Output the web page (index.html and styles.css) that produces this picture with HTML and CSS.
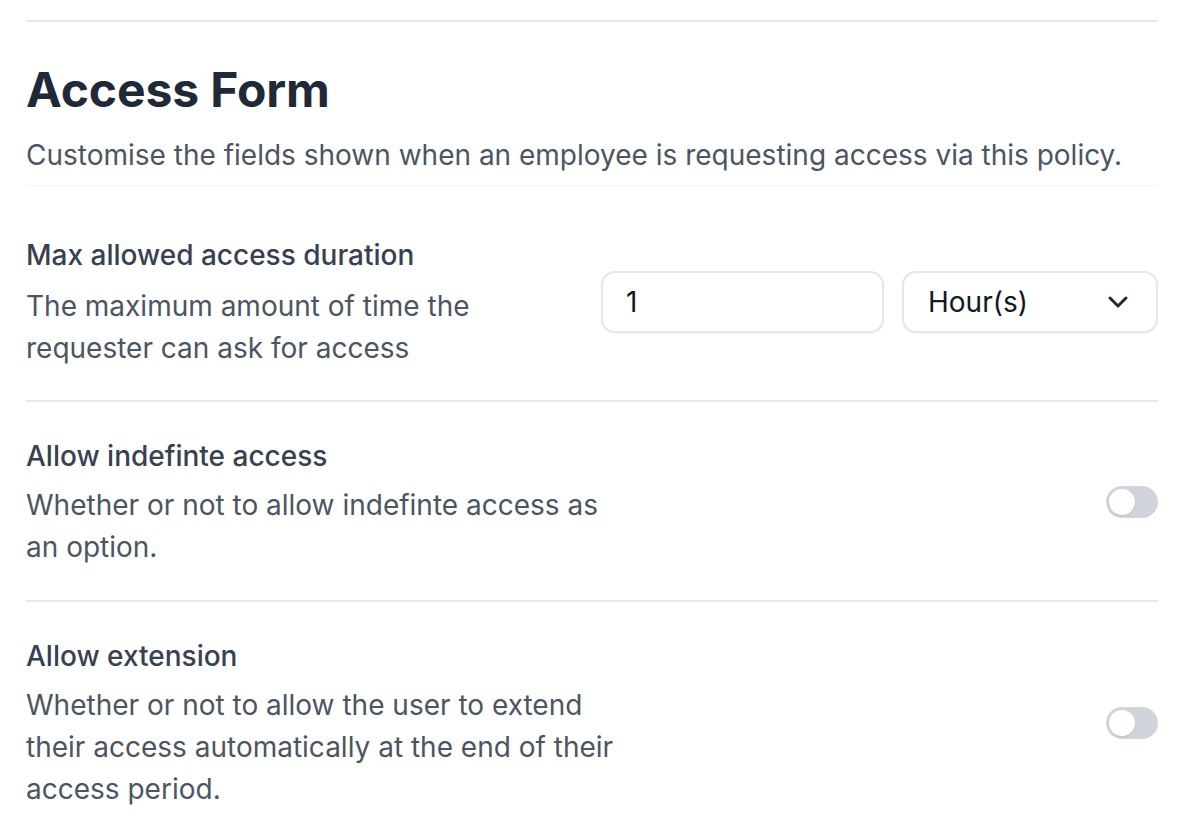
FILE: index.html
```html
<!DOCTYPE html>
<html lang="en">
<head>
<meta charset="utf-8">
<title>Access Form</title>
<link rel="stylesheet" href="styles.css">
</head>
<body>
<section class="section">
  <header class="header">
    <h2 class="title">Access Form</h2>
    <p class="subtitle">Customise the fields shown when an employee is requesting access via this policy.</p>
  </header>
  <div class="rows">
    <div class="row row-first">
      <div class="text text-narrow">
        <div class="label">Max allowed access duration</div>
        <div class="desc">The maximum amount of time the requester can ask for access</div>
      </div>
      <div class="controls">
        <div class="input">1</div>
        <div class="select">
          <span>Hour(s)</span>
          <svg class="chev" width="20" height="12" viewBox="0 0 20 12"><path d="M2 2 L10 10 L18 2" fill="none" stroke="#1f2937" stroke-width="3" stroke-linecap="round" stroke-linejoin="round"/></svg>
        </div>
      </div>
    </div>
    <div class="row">
      <div class="text">
        <div class="label">Allow indefinte access</div>
        <div class="desc">Whether or not to allow indefinte access as an option.</div>
      </div>
      <div class="toggle"><span class="knob"></span></div>
    </div>
    <div class="row">
      <div class="text">
        <div class="label">Allow extension</div>
        <div class="desc">Whether or not to allow the user to extend their access automatically at the end of their access period.</div>
      </div>
      <div class="toggle"><span class="knob"></span></div>
    </div>
  </div>
</section>
</body>
</html>
```

FILE: styles.css
```css
* { box-sizing: border-box; }
html, body { margin: 0; padding: 0; background: #ffffff; }
body {
  font-family: "Inter", "Noto Sans", sans-serif;
  padding: 20px 26px 0 26px;
  color: #4b5563;
}
.section {
  border-top: 2px solid #e5e7eb;
}
.header {
  padding-top: 36px;
  padding-bottom: 10px;
  border-bottom: 1px solid #f3f4f6;
}
.title {
  margin: 0;
  font-size: 48px;
  line-height: 64px;
  font-weight: 650;
  color: #1f2937;
  letter-spacing: -0.1px;
}
.subtitle {
  margin: 13px 0 0 0;
  font-size: 28px;
  line-height: 40px;
  color: #4b5563;
}
.row {
  display: flex;
  align-items: center;
  justify-content: space-between;
  gap: 32px;
  padding: 33px 0 32px 0;
  border-top: 2px solid #e5e7eb;
}
.row-first {
  border-top: none;
  padding-top: 48px;
  padding-bottom: 31px;
}
.text { width: 600px; }
.text-narrow { width: auto; flex: 1; }
.label {
  font-size: 28px;
  line-height: 42px;
  font-weight: 500;
  color: #374151;
}
.desc {
  margin-top: 7px;
  font-size: 28px;
  line-height: 42px;
  color: #4b5563;
}
.row-first .desc { margin-top: 9px; }
.controls {
  display: flex;
  gap: 18px;
  flex: none;
}
.input, .select {
  height: 62px;
  border: 2px solid #e5e7eb;
  border-radius: 14px;
  box-shadow: 0 1px 2px rgba(0,0,0,0.05);
  font-size: 28px;
  color: #111827;
  display: flex;
  align-items: center;
  background: #fff;
}
.input {
  width: 283px;
  padding-left: 23px;
}
.select {
  width: 256px;
  padding: 0 28px 0 24px;
  justify-content: space-between;
}
.chev { display: block; }
.toggle {
  flex: none;
  width: 52px;
  height: 32px;
  border-radius: 16px;
  background: #d1d5db;
  padding: 3px;
  display: flex;
  align-items: center;
}
.knob {
  width: 26px;
  height: 26px;
  border-radius: 50%;
  background: #ffffff;
  box-shadow: 0 1px 2px rgba(0,0,0,0.1);
}
```
